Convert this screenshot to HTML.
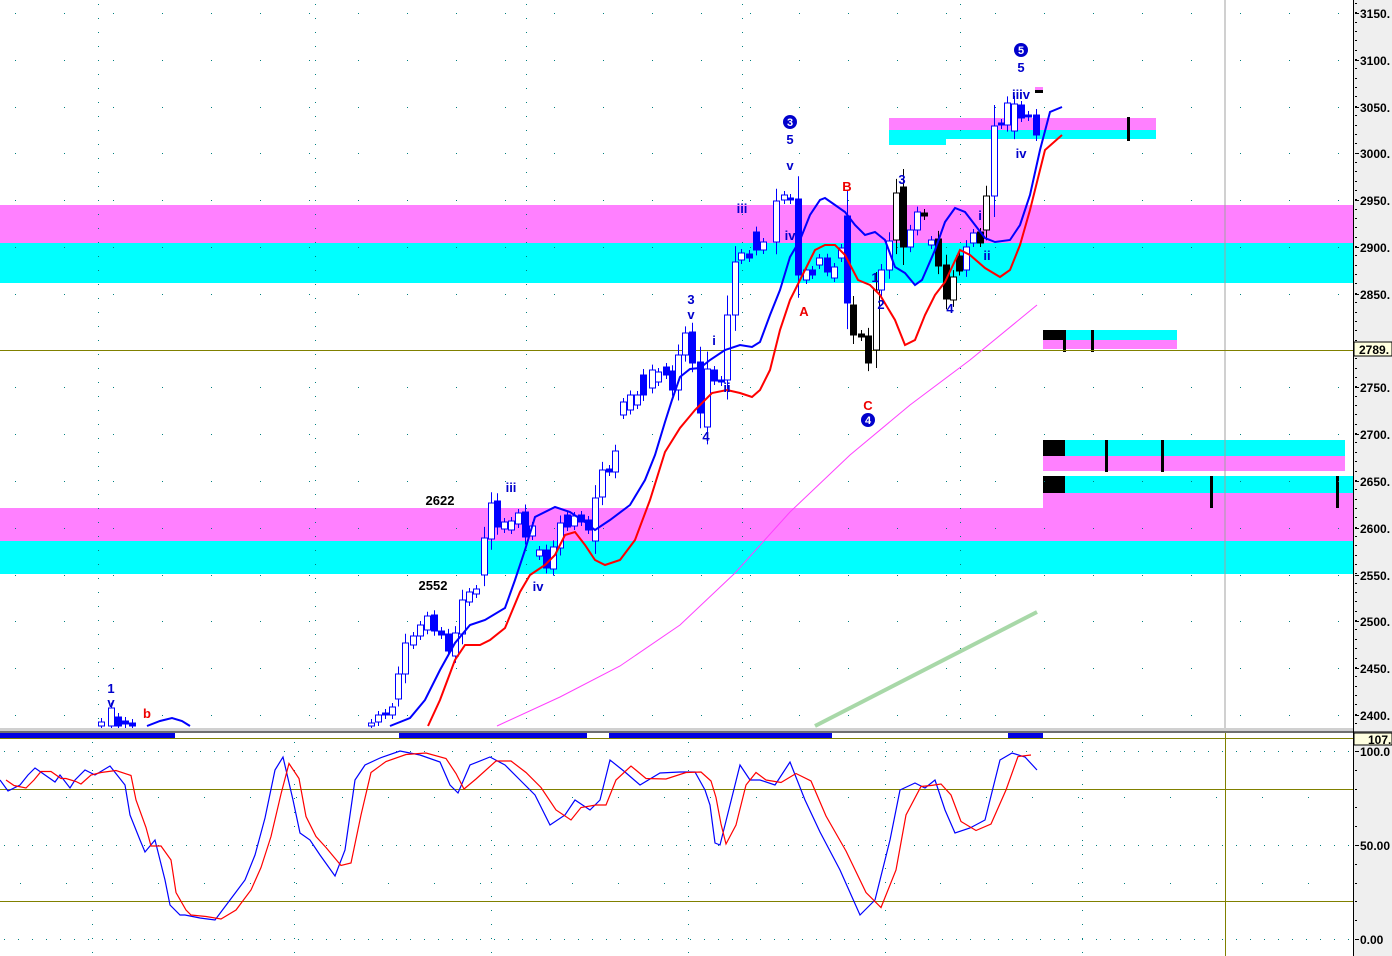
<!DOCTYPE html>
<html><head><meta charset="utf-8"><style>
html,body{margin:0;padding:0;background:#fff;width:1392px;height:956px;overflow:hidden}
svg{display:block}
text{font-family:"Liberation Sans",Arial,sans-serif;font-weight:bold}
</style></head><body>
<svg id="s" width="1392" height="956" viewBox="0 0 1392 956" xmlns="http://www.w3.org/2000/svg">
<rect x="0" y="0" width="1392" height="956" fill="#fff"/>
<rect x="1353" y="0" width="39" height="956" fill="#efefef"/>
<rect x="0" y="205" width="1353" height="38" fill="#ff80ff"/>
<rect x="0" y="243" width="1353" height="40" fill="#00ffff"/>
<rect x="0" y="508" width="1353" height="33" fill="#ff80ff"/>
<rect x="0" y="541" width="1353" height="33" fill="#00ffff"/>
<rect x="1043" y="493" width="310" height="15" fill="#ff80ff"/>
<rect x="1043" y="440" width="302" height="16" fill="#00ffff"/>
<rect x="1043" y="456" width="302" height="15" fill="#ff80ff"/>
<rect x="1043" y="476" width="310" height="17" fill="#00ffff"/>
<rect x="1043" y="440" width="22" height="16" fill="#000"/>
<rect x="1043" y="476" width="22" height="17" fill="#000"/>
<rect x="1105" y="440" width="3" height="32" fill="#000"/>
<rect x="1161" y="440" width="3" height="32" fill="#000"/>
<rect x="1210" y="476" width="3" height="32" fill="#000"/>
<rect x="1336" y="476" width="3" height="32" fill="#000"/>
<rect x="889" y="118" width="267" height="12" fill="#ff80ff"/>
<rect x="946" y="130" width="210" height="9" fill="#00ffff"/>
<rect x="889" y="130" width="57" height="15" fill="#00ffff"/>
<rect x="1127" y="117" width="3" height="24" fill="#000"/>
<rect x="1043" y="330" width="134" height="10" fill="#00ffff"/>
<rect x="1043" y="340" width="134" height="9" fill="#ff80ff"/>
<rect x="1043" y="330" width="22" height="10" fill="#000"/>
<rect x="1063" y="330" width="3" height="22" fill="#000"/>
<rect x="1091" y="330" width="3" height="22" fill="#000"/>
<g id="grid"></g>
<line x1="1225" y1="0" x2="1225" y2="728" stroke="#a0a0a0" stroke-width="1"/>
<line x1="0" y1="350.5" x2="1353" y2="350.5" stroke="#808000" stroke-width="1"/>
<polyline points="497,726 560,697 620,666 680,625 735,573 790,512 850,455 910,405 970,360 1037,305" fill="none" stroke="#ff40ff" stroke-width="1"/>
<line x1="815" y1="726" x2="1037" y2="612" stroke="#a8d8a8" stroke-width="4"/>
<g id="candles"></g>
<polyline id="blue" fill="none" stroke="#0000ff" stroke-width="2"/>
<polyline id="red" fill="none" stroke="#ff0000" stroke-width="2"/>
<polyline points="147,726 160,721 172,718 182,721 190,726" fill="none" stroke="#0000ff" stroke-width="2"/>
<g font-size="13" fill="#0000cc" text-anchor="middle">
<text x="111" y="693">1</text><text x="111" y="707">v</text>
<text x="511" y="492">iii</text><text x="538" y="591">iv</text>
<text x="691" y="304">3</text><text x="691" y="319">v</text><text x="714" y="345">i</text><text x="727" y="392">ii</text><text x="706" y="441">4</text>
<text x="742" y="213">iii</text><text x="790" y="240">iv</text><text x="790" y="170">v</text><text x="790" y="144">5</text>
<text x="875" y="282">1</text><text x="881" y="309">2</text><text x="902" y="184">3</text><text x="950" y="313">4</text><text x="980" y="220">i</text><text x="987" y="260">ii</text>
<text x="1021" y="99">iiiv</text><text x="1021" y="158">iv</text><text x="1021" y="72">5</text>
</g>
<g font-size="13" fill="#ee0000" text-anchor="middle">
<text x="147" y="718">b</text><text x="804" y="316">A</text><text x="847" y="191">B</text><text x="868" y="410">C</text>
</g>
<g font-size="13" fill="#000" text-anchor="middle"><text x="440" y="505">2622</text><text x="433" y="590">2552</text></g>
<g font-size="11" text-anchor="middle">
<circle cx="790" cy="122" r="7" fill="#0000cc"/><text x="790" y="126" fill="#fff">3</text>
<circle cx="868" cy="420" r="7" fill="#0000cc"/><text x="868" y="424" fill="#fff">4</text>
<circle cx="1021" cy="50" r="7" fill="#0000cc"/><text x="1021" y="54" fill="#fff">5</text>
</g>
<rect x="1035" y="87" width="8" height="3" fill="#ff80ff"/><rect x="1035" y="90" width="8" height="3" fill="#000"/>
<rect x="0" y="728" width="1353" height="3" fill="#d0d0d0"/>
<rect x="0" y="731" width="1392" height="2" fill="#707070"/>
<rect x="0" y="733" width="175" height="5" fill="#0000e0"/>
<rect x="399" y="733" width="188" height="5" fill="#0000e0"/>
<rect x="609" y="733" width="223" height="5" fill="#0000e0"/>
<rect x="1008" y="733" width="35" height="5" fill="#0000e0"/>
<line x1="0" y1="738.5" x2="1353" y2="738.5" stroke="#808000"/>
<line x1="0" y1="789.5" x2="1353" y2="789.5" stroke="#808000"/>
<line x1="0" y1="901.5" x2="1353" y2="901.5" stroke="#808000"/>
<line x1="1225.5" y1="733" x2="1225.5" y2="956" stroke="#808000"/>
<polyline id="sb" fill="none" stroke="#0000ff" stroke-width="1.2"/>
<polyline id="sr" fill="none" stroke="#ff0000" stroke-width="1.2"/>
<line x1="1353.5" y1="0" x2="1353.5" y2="956" stroke="#000"/>
<g id="axis" font-size="12" fill="#000"></g>
<rect x="1354" y="342" width="38" height="14" fill="#ffffe0" stroke="#000"/>
<text x="1359" y="354" font-size="12">2789.</text>
<rect x="1354" y="733" width="38" height="12" fill="#ffffe0" stroke="#000"/>
<text x="1368" y="744" font-size="12">107.</text>
</svg>
<script>
var NS="http://www.w3.org/2000/svg";
function el(p,t,a){var e=document.createElementNS(NS,t);for(var k in a)e.setAttribute(k,a[k]);p.appendChild(e);return e;}
var g=document.getElementById('grid');
var hy=[13,60,107,153,200,247,294,387,434,481,528,575,621,668,715];
hy.forEach(function(y){for(var x=15;x<1350;x+=49)el(g,'rect',{x:x,y:y,width:1,height:1,fill:'#008080'});});
[98,315,526,742,960].forEach(function(x){for(var y=4;y<728;y+=14)el(g,'rect',{x:x,y:y,width:1,height:1,fill:'#008080'});});
[751,845,939].forEach(function(y){for(var x=4;x<1350;x+=14)el(g,'rect',{x:x,y:y,width:1,height:1,fill:'#008080'});});
[797,883].forEach(function(y){for(var x=20;x<1350;x+=46)el(g,'rect',{x:x,y:y,width:1,height:1,fill:'#008080'});});
[92,294,491,688,885,1082].forEach(function(x){for(var y=742;y<956;y+=14)el(g,'rect',{x:x,y:y,width:1,height:1,fill:'#008080'});});
var c=[[101,722,726,1],[111,708,726,1],[118,717,726,0],[125,721,724,0],[132,723,726,0],
[371,723,726,1],[378,715,722,1],[385,713,715,0],[392,707,715,1],[398,674,699,1],[405,643,674,1],[413,636,645,1],[420,625,636,1],[427,616,630,1],[434,615,631,0],[441,631,635,0],[448,634,651,0],[455,633,656,1],[462,600,634,1],[469,592,602,1],[476,589,594,1],[484,538,575,1],[491,503,539,1],[497,501,527,0],[504,522,529,1],[511,521,530,1],[518,513,524,1],[525,512,537,0],[532,526,536,1],[539,550,556,1],[546,550,568,0],[553,547,569,1],[560,523,548,1],[567,515,527,0],[574,516,526,1],[581,515,522,0],[588,520,530,0],[595,498,541,1],[602,470,497,1],[609,469,472,0],[615,451,472,1],
[623,402,415,1],[630,395,410,1],[637,395,405,1],[643,375,395,0],[652,370,388,1],[658,372,382,1],[666,367,375,0],[672,371,390,0],[678,355,390,1],[685,333,355,1],[692,332,363,0],[700,362,413,0],[707,369,427,1],[714,370,381,0],[721,380,382,0],[727,315,380,1],[735,262,315,1],[741,253,260,1],[749,254,258,0],[756,232,250,0],[763,242,250,1],[776,201,242,1],[784,195,200,1],[790,198,200,0],[798,199,275,0],[806,270,280,1],[812,270,275,0],[819,258,265,1],[827,258,272,0],[834,267,278,1],[841,248,258,1],[847,216,303,0],
[853,305,335,0,'#000'],[861,334,337,0,'#000'],[868,336,363,0,'#000'],[876,290,350,1,'#000'],[881,270,290,1],[889,241,270,1],[896,193,240,1,'#000'],[903,187,247,0,'#000'],[910,230,247,1],[917,212,230,1],[924,213,216,0,'#000'],[931,240,245,1],[938,239,266,0,'#000'],[946,265,299,0,'#000'],[953,277,300,1,'#000'],[959,256,271,0,'#000'],[966,247,270,1],[973,233,243,1],[980,232,243,0,'#000'],[986,196,230,1,'#000'],[994,126,196,1],[1001,123,125,0],[1007,103,125,1],[1014,104,131,1],[1021,105,118,0],[1028,115,117,0],[1036,115,135,0]];
var cg=document.getElementById('candles');
c.forEach(function(k){var col=k[4]||'#0000ff';var x=k[0];
el(cg,'line',{x1:x+.5,y1:k[1]-Math.max(4,(k[2]-k[1])*.3),x2:x+.5,y2:k[2]+Math.max(4,(k[2]-k[1])*.3),stroke:col,'stroke-width':1});
el(cg,'rect',{x:x-2.5,y:k[1],width:6,height:Math.max(2,k[2]-k[1]),fill:k[3]?'#fff':col,stroke:col,'stroke-width':1});});
function pts(a){return a.map(function(p){return p.join(',')}).join(' ');}
document.getElementById('blue').setAttribute('points',pts([[390,726],[410,718],[425,700],[440,670],[455,643],[470,625],[485,620],[505,608],[515,580],[525,550],[535,517],[555,507],[570,512],[585,522],[595,530],[610,520],[630,505],[645,480],[655,455],[665,422],[672,400],[680,377],[690,369],[700,368],[710,360],[725,350],[740,345],[752,347],[760,342],[770,315],[780,290],[790,257],[800,240],[810,215],[820,200],[825,198],[835,205],[845,212],[855,225],[865,235],[875,232],[885,240],[895,267],[905,273],[915,285],[922,280],[935,250],[945,222],[955,208],[965,212],[975,225],[985,238],[995,242],[1010,240],[1020,225],[1030,195],[1040,150],[1050,112],[1062,107]]));
document.getElementById('red').setAttribute('points',pts([[428,726],[440,700],[455,660],[465,645],[480,645],[490,640],[505,628],[520,592],[530,575],[545,565],[555,555],[565,535],[575,532],[585,545],[595,560],[605,565],[620,560],[635,540],[650,500],[665,452],[680,428],[695,410],[712,393],[727,390],[740,393],[752,397],[760,390],[770,370],[780,330],[790,300],[800,280],[815,250],[825,245],[835,245],[845,255],[858,280],[870,285],[880,295],[895,320],[905,345],[915,340],[925,315],[935,295],[945,282],[960,250],[970,255],[985,268],[1000,277],[1010,270],[1020,245],[1030,210],[1045,150],[1062,135]]));
var sb=[[0,780],[8,791],[20,785],[28,775],[35,768],[45,775],[55,782],[60,775],[70,788],[75,780],[85,770],[95,775],[110,766],[125,785],[130,815],[140,840],[145,852],[155,840],[165,880],[170,905],[180,915],[185,915],[200,918],[215,920],[230,900],[245,880],[255,855],[265,818],[275,770],[283,757],[293,800],[300,833],[310,840],[320,855],[335,876],[345,850],[355,780],[365,765],[380,758],[400,751],[420,755],[440,762],[450,785],[458,793],[470,765],[490,757],[505,765],[520,780],[535,795],[550,825],[565,815],[575,800],[590,810],[600,800],[610,760],[625,772],[640,785],[660,773],[680,772],[695,772],[705,790],[710,805],[715,843],[720,845],[730,805],[740,765],[750,780],[760,780],[775,785],[790,762],[805,800],[820,832],[840,870],[860,915],[875,900],[890,840],[900,790],[915,783],[925,788],[935,780],[945,810],[955,833],[970,828],[985,820],[1000,760],[1012,753],[1025,757],[1037,770]];
document.getElementById('sb').setAttribute('points',pts(sb));
var sr=sb.map(function(p,i){var q=sb[Math.max(0,i-1)];return [p[0]+6,(p[1]+q[1])/2];});
document.getElementById('sr').setAttribute('points',pts(sr.filter(function(p){return p[0]<=1040})));
var ax=document.getElementById('axis');
var labs=[[13,'3150.'],[60,'3100.'],[107,'3050.'],[153,'3000.'],[200,'2950.'],[247,'2900.'],[294,'2850.'],[387,'2750.'],[434,'2700.'],[481,'2650.'],[528,'2600.'],[575,'2550.'],[621,'2500.'],[668,'2450.'],[715,'2400.'],[751,'100.0'],[845,'50.00'],[939,'0.00']];
labs.forEach(function(l){el(ax,'line',{x1:1355,y1:l[0]+.5,x2:1359,y2:l[0]+.5,stroke:'#000'});var t=el(ax,'text',{x:1360,y:l[0]+5});t.textContent=l[1];});
for(var y=3;y<728;y+=9.35)el(ax,'rect',{x:1355,y:Math.round(y),width:2,height:1,fill:'#000'});
for(var y=751;y<956;y+=18.8)el(ax,'rect',{x:1355,y:Math.round(y),width:2,height:1,fill:'#000'});
</script>
</body></html>
